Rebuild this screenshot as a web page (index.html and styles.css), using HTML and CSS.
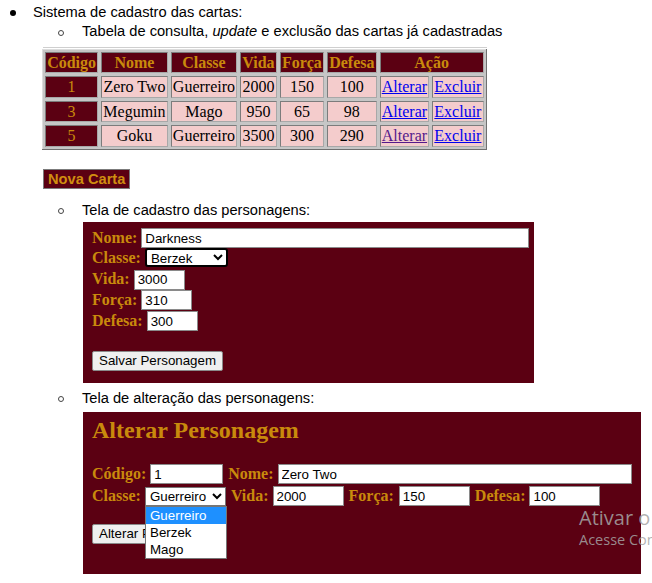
FILE: index.html
```html
<!DOCTYPE html>
<html lang="pt-BR">
<head>
<meta charset="utf-8">
<title>Sistema de cadastro das cartas</title>
<link rel="stylesheet" href="styles.css">
</head>
<body>
<div class="page">
  <div class="item item-l1"><span class="mark disc"></span><span>Sistema de cadastro das cartas:</span></div>
  <div class="item item-l2"><span class="mark ring"></span><span>Tabela de consulta, <i>update</i> e exclusão das cartas já cadastradas</span></div>

  <div class="shot-table">
    <div class="rule"></div>
    <table class="cards">
      <tr><th>Código</th><th>Nome</th><th>Classe</th><th>Vida</th><th>Força</th><th>Defesa</th><th colspan="2">Ação</th></tr>
      <tr><td class="id">1</td><td>Zero Two</td><td>Guerreiro</td><td>2000</td><td>150</td><td>100</td><td><a class="lnk" href="#a1">Alterar</a></td><td><a class="lnk" href="#e1">Excluir</a></td></tr>
      <tr><td class="id">3</td><td>Megumin</td><td>Mago</td><td>950</td><td>65</td><td>98</td><td><a class="lnk" href="#a3">Alterar</a></td><td><a class="lnk" href="#e3">Excluir</a></td></tr>
      <tr><td class="id">5</td><td>Goku</td><td>Guerreiro</td><td>3500</td><td>300</td><td>290</td><td><a class="lnk visited" href="#a5">Alterar</a></td><td><a class="lnk" href="#e5">Excluir</a></td></tr>
    </table>
  </div>

  <button class="nova" type="button">Nova Carta</button>

  <div class="item item-l2 item-cad"><span class="mark ring"></span><span>Tela de cadastro das personagens:</span></div>

  <form class="box box-cad">
    <div class="frow"><label class="lbl">Nome:</label><input class="inp w-nome1" type="text" value="Darkness"></div>
    <div class="frow"><label class="lbl">Classe:</label><select class="sel sel-focus"><option>Berzek</option><option>Guerreiro</option><option>Mago</option></select></div>
    <div class="frow"><label class="lbl">Vida:</label><input class="inp w-small" type="text" value="3000"></div>
    <div class="frow"><label class="lbl">Força:</label><input class="inp w-small" type="text" value="310"></div>
    <div class="frow"><label class="lbl">Defesa:</label><input class="inp w-small" type="text" value="300"></div>
    <button class="btn btn-save" type="button">Salvar Personagem</button>
  </form>

  <div class="item item-l2 item-alt"><span class="mark ring"></span><span>Tela de alteração das personagens:</span></div>

  <form class="box box-alt">
    <h2 class="title">Alterar Personagem</h2>
    <div class="frow frow-alt1">
      <label class="lbl">Código:</label><input class="inp w-cod" type="text" value="1">
      <label class="lbl">Nome:</label><input class="inp w-nome2" type="text" value="Zero Two">
    </div>
    <div class="frow">
      <label class="lbl">Classe:</label><select class="sel sel-open"><option>Guerreiro</option><option>Berzek</option><option>Mago</option></select>
      <label class="lbl">Vida:</label><input class="inp w-mid" type="text" value="2000">
      <label class="lbl lbl-forca">Força:</label><input class="inp w-mid" type="text" value="150">
      <label class="lbl">Defesa:</label><input class="inp w-mid" type="text" value="100">
    </div>
    <button class="btn btn-alt" type="button">Alterar Personagem</button>
    <div class="dropdown">
      <div class="opt opt-hl">Guerreiro</div>
      <div class="opt">Berzek</div>
      <div class="opt">Mago</div>
    </div>
  </form>

  <div class="watermark">
    <div class="wm-1">Ativar o Windows</div>
    <div class="wm-2">Acesse Configurações para ativar o Windows.</div>
  </div>
</div>
</body>
</html>
```

FILE: styles.css
```css
* { box-sizing: border-box; }
html, body { margin: 0; padding: 0; background: #ffffff; }
body {
  font-family: "Liberation Sans", Arial, sans-serif;
  font-size: 14.67px;
  color: #000000;
}
.page {
  position: relative;
  width: 652px;
  height: 583px;
  overflow: hidden;
}

/* list lines */
.item {
  display: flex;
  align-items: center;
  height: 19px;
  line-height: 19px;
  white-space: nowrap;
}
.item-l1 { margin-top: 3px; padding-left: 10px; }
.item-l2 { padding-left: 58px; }
.mark { flex: none; display: block; }
.disc {
  width: 6px; height: 6px;
  border-radius: 50%;
  background: #000;
  margin-right: 17px;
}
.ring {
  width: 6px; height: 6px;
  border: 1px solid #444;
  border-radius: 50%;
  margin-right: 18px;
  margin-top: 2px;
}

/* table screenshot */
.shot-table { margin-left: 43px; margin-top: 6px; }
.rule { width: 444px; height: 1px; background: #cfcfcf; }
.cards {
  margin-top: 1px;
  margin-left: -1px;
  border-collapse: separate;
  border-spacing: 3px;
  background: #c6c6c6;
  box-shadow: inset -1px -1px 0 #707070, inset 1px 1px 0 #dcdcdc;
  font-family: "Liberation Serif", "Times New Roman", serif;
  font-size: 16px;
}
.cards th, .cards td {
  padding: 1px 1.15px;
  line-height: 17.4px;
  text-align: center;
  white-space: nowrap;
  border: 1px solid;
  border-color: #7c7c7c #a8a8a8 #a8a8a8 #7c7c7c;
}
.cards th { background: #5b0012; color: #c98a0c; font-weight: bold; }
.cards td { background: #f4cccc; color: #000; }
.cards td.id { background: #5b0012; color: #c98a0c; }
.lnk { color: #0000ee; text-decoration: underline; }
.lnk.visited { color: #551a8b; }

/* Nova carta */
.nova {
  display: block;
  margin: 19px 0 0 43px;
  height: 20px;
  padding: 0 4px;
  border: 1px solid #7b7b7b;
  background: #5b0012;
  color: #d08e10;
  font-family: "Liberation Sans", Arial, sans-serif;
  font-weight: bold;
  font-size: 14.67px;
  line-height: 18px;
}

.item-cad { margin-top: 12px; }
.item-alt { margin-top: 6px; }

/* forms */
.box {
  position: relative;
  margin-left: 83px;
  background: #5b0012;
  padding-left: 9px;
}
.box-cad { margin-top: 2px; width: 451px; height: 161px; padding-top: 6px; }
.box-alt { margin-top: 4px; width: 558px; height: 162px; padding-top: 4px; }

.frow {
  display: flex;
  align-items: baseline;
  height: 20.75px;
  white-space: nowrap;
}
.lbl {
  font-family: "Liberation Serif", "Times New Roman", serif;
  font-weight: bold;
  font-size: 16px;
  line-height: 20px;
  color: #c98a0c;
  margin-right: 4px;
}
.inp {
  height: 20px;
  padding: 0 3px;
  border: 1px solid #8a8a8a;
  background: #fff;
  font-family: "Liberation Sans", Arial, sans-serif;
  font-size: 13.33px;
  color: #000;
  margin: 0 5px 0 0;
}
.w-nome1 { width: 390px; }
.w-small { width: 51px; }
.w-cod { width: 73px; }
.w-nome2 { width: 354px; }
.w-mid { width: 71px; }
.lbl-forca { margin-right: 5px; }

.sel {
  height: 19px;
  font-family: "Liberation Sans", Arial, sans-serif;
  font-size: 13.33px;
  color: #000;
  background: #fff;
  margin: 0 5px 0 0;
}
.sel-focus {
  width: 83px;
  border: 2px solid #000;
  border-radius: 3px;
}
.sel-open {
  width: 81px;
  border: 1px solid #767676;
  border-radius: 0;
}

.btn {
  display: block;
  height: 20px;
  padding: 0 6px;
  border: 1px solid #8a8a8a;
  border-radius: 2px;
  background: #efefef;
  font-family: "Liberation Sans", Arial, sans-serif;
  font-size: 13.33px;
  color: #000;
  line-height: 18px;
}
.btn-save { margin-top: 19.5px; }
.btn-alt { margin-top: 18px; }

.title {
  margin: 0;
  font-family: "Liberation Serif", "Times New Roman", serif;
  font-weight: bold;
  font-size: 24px;
  line-height: 28px;
  color: #c98a0c;
}
.frow-alt1 { margin-top: 20px; height: 22px; }

/* open dropdown of the select */
.dropdown {
  position: absolute;
  left: 62px;
  top: 94px;
  width: 82px;
  background: #fff;
  border: 1px solid #767676;
  font-family: "Liberation Sans", Arial, sans-serif;
  font-size: 13.33px;
}
.opt {
  height: 17px;
  line-height: 17px;
  padding-left: 4px;
  color: #000;
}
.opt-hl { background: #1e90ff; color: #fff; }

/* Windows activation watermark */
.watermark {
  position: absolute;
  left: 579px;
  top: 506px;
  white-space: nowrap;
  font-family: "Open Sans", "Noto Sans", sans-serif;
  color: rgba(165, 165, 165, 0.85);
}
.wm-1 { font-size: 20px; line-height: 24px; }
.wm-2 { font-size: 14.5px; line-height: 20px; }
```
